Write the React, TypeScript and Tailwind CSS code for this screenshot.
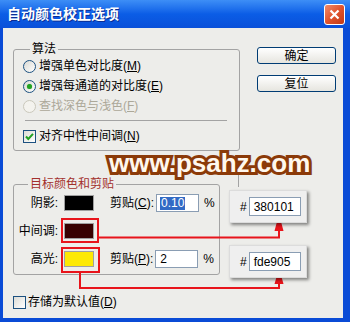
import React from 'react';

function Radio({ checked = false, disabled = false }: { checked?: boolean; disabled?: boolean }) {
  return (
    <span
      className={`flex h-[13px] w-[13px] shrink-0 items-center justify-center rounded-full border ${
        disabled ? 'border-[#cac8bb] bg-[#f4f3ee]' : 'border-[#1c5180] bg-linear-to-br from-[#d9d9d3] to-white'
      }`}
    >
      {checked && <span className="h-[5px] w-[5px] rounded-full bg-[#21a121] shadow-[0_0_1px_#5ec75e]" />}
    </span>
  );
}

function CheckBox({ checked = false }: { checked?: boolean }) {
  return (
    <span className="flex h-[13px] w-[13px] shrink-0 items-center justify-center border border-[#1c5180] bg-linear-to-br from-[#dcdcd6] to-white">
      {checked && (
        <svg width="9" height="9" viewBox="0 0 9 9">
          <path d="M1 4.5 L3.3 7 L8 1.8" fill="none" stroke="#21a121" strokeWidth="2" />
        </svg>
      )}
    </span>
  );
}

function Btn({ children }: { children: React.ReactNode }) {
  return (
    <div className="flex h-[17px] w-[79px] items-center justify-center rounded-[3px] border border-[#003c74] bg-linear-to-b from-white to-[#e6e5df] leading-none">
      {children}
    </div>
  );
}

function Swatch({ color }: { color: string }) {
  return <span className="ml-[6px] h-[16px] w-[30px] shrink-0 border border-[#a0a0a0]" style={{ backgroundColor: color }} />;
}

function HexBox({ value, top }: { value: string; top: string }) {
  return (
    <div
      className={`absolute left-[229px] ${top} flex h-[33px] w-[78px] items-center border border-[#dcdcdc] bg-[#efefef] pl-[10px] shadow-[2px_2px_3px_rgba(0,0,0,0.45)]`}
    >
      <span>#</span>
      <span className="ml-[2px] flex h-[19px] w-[52px] items-center border border-[#8a9db3] bg-white pl-[4px]">{value}</span>
    </div>
  );
}

export default function App() {
  return (
    <div className="relative flex h-[322px] w-[350px] flex-col overflow-hidden bg-[#0a4bd6] font-['Liberation_Sans','Noto_Sans_CJK_SC',sans-serif] text-[12px] text-black">
      {/* 타이틀 바 */}
      <div className="flex h-[28px] shrink-0 items-center justify-between bg-linear-to-b from-[#3d8ef6] via-[#0b5de6] to-[#0a50d9] pl-[7px] pr-[5px]">
        <span className="text-[14px] leading-none font-bold text-white [text-shadow:1px_1px_0_#0b2d94]">自动颜色校正选项</span>
        <span className="flex h-[21px] w-[21px] items-center justify-center rounded-[3px] border border-white bg-linear-to-br from-[#f08a68] via-[#e0532c] to-[#c23a16]">
          <svg width="11" height="11" viewBox="0 0 11 11">
            <path d="M1.5 1.5 L9.5 9.5 M9.5 1.5 L1.5 9.5" stroke="white" strokeWidth="2.2" />
          </svg>
        </span>
      </div>

      {/* 본문 */}
      <div className="mb-[4px] ml-[3px] mr-[7px] flex-1 bg-[#ededea]">
        <div className="flex items-start">
          {/* 算法 */}
          <fieldset className="mt-[14px] ml-[10px] w-[227px] rounded-[3px] border border-[#a3a3a3] pb-[4px]">
            <legend className="ml-[16px] px-[2px] leading-[14px]">算法</legend>
            <div className="flex h-[20px] items-center gap-[3px] pl-[9px]">
              <Radio />
              <span>
                增强单色对比度(<span className="underline">M</span>)
              </span>
            </div>
            <div className="flex h-[20px] items-center gap-[3px] pl-[9px]">
              <Radio checked />
              <span>
                增强每通道的对比度(<span className="underline">E</span>)
              </span>
            </div>
            <div className="flex h-[20px] items-center gap-[3px] pl-[9px] text-[#aca899]">
              <Radio disabled />
              <span>
                查找深色与浅色(<span className="underline">F</span>)
              </span>
            </div>
            <div className="mt-[4px] mr-[12px] ml-[11px] border-t border-[#a3a3a3]" />
            <div className="mt-[5px] flex h-[20px] items-center gap-[3px] pl-[9px]">
              <CheckBox checked />
              <span>
                对齐中性中间调(<span className="underline">N</span>)
              </span>
            </div>
          </fieldset>

          {/* 버튼 */}
          <div className="mt-[19px] mr-[7px] ml-auto flex flex-col gap-[11px]">
            <Btn>确定</Btn>
            <Btn>复位</Btn>
          </div>
        </div>

        {/* 目标颜色和剪贴 */}
        <fieldset className="mt-[26px] ml-[10px] w-[207px] rounded-[3px] border border-[#a3a3a3] pb-[1px]">
          <legend className="ml-[14px] px-[2px] leading-[14px] text-[#a3302c]">目标颜色和剪贴</legend>
          <div className="-mt-[2px] flex h-[28px] items-center">
            <span className="w-[44px] text-right">阴影:</span>
            <Swatch color="#000000" />
            <span className="ml-[16px]">
              剪贴(<span className="underline">C</span>):
            </span>
            <span className="ml-[2px] flex h-[18px] w-[43px] items-center border border-[#8a9db3] bg-white pl-[3px]">
              <span className="bg-[#316ac5] px-[1px] leading-[13px] text-white">0.10</span>
            </span>
            <span className="ml-[5px]">%</span>
          </div>
          <div className="flex h-[28px] items-center">
            <span className="w-[44px] text-right">中间调:</span>
            <Swatch color="#380101" />
          </div>
          <div className="flex h-[28px] items-center">
            <span className="w-[44px] text-right">高光:</span>
            <Swatch color="#fde905" />
            <span className="ml-[16px]">
              剪贴(<span className="underline">P</span>):
            </span>
            <span className="ml-[2px] flex h-[18px] w-[43px] items-center border border-[#8a9db3] bg-white pl-[4px]">2</span>
            <span className="ml-[5px]">%</span>
          </div>
        </fieldset>

        <div className="mt-[17px] ml-[10px] flex h-[20px] items-center gap-[2px]">
          <CheckBox />
          <span>
            存储为默认值(<span className="underline">D</span>)
          </span>
        </div>
      </div>

      {/* 주석: 빨간 선, 화살표 */}
      <svg className="pointer-events-none absolute top-0 left-0" width="350" height="322">
        <line x1="238.5" y1="164" x2="238.5" y2="187" stroke="#a3a3a3" />
        <rect x="62" y="219" width="36" height="23" fill="none" stroke="#e8141b" strokeWidth="2" />
        <rect x="62" y="248" width="37" height="24" fill="none" stroke="#e8141b" strokeWidth="2" />
        <polyline points="99,237.5 279,237.5 279,229" fill="none" stroke="#e8141b" strokeWidth="2" />
        <polygon points="279,214 274.5,231 283.5,231" fill="#e8141b" />
        <polyline points="80,272 80,288 279,288 279,282" fill="none" stroke="#e8141b" strokeWidth="2" />
        <polygon points="279,268 274.5,284 283.5,284" fill="#e8141b" />
      </svg>

      <HexBox value="380101" top="top-[190px]" />
      <HexBox value="fde905" top="top-[245px]" />

      {/* 워터마크 */}
      <span className="pointer-events-none absolute top-[150px] left-[109px] text-[26px] leading-[26px] font-bold text-[#fff8ee] [paint-order:stroke_fill] [-webkit-text-stroke:6px_#8b3a08]">
        www.psahz.com
      </span>
    </div>
  );
}
